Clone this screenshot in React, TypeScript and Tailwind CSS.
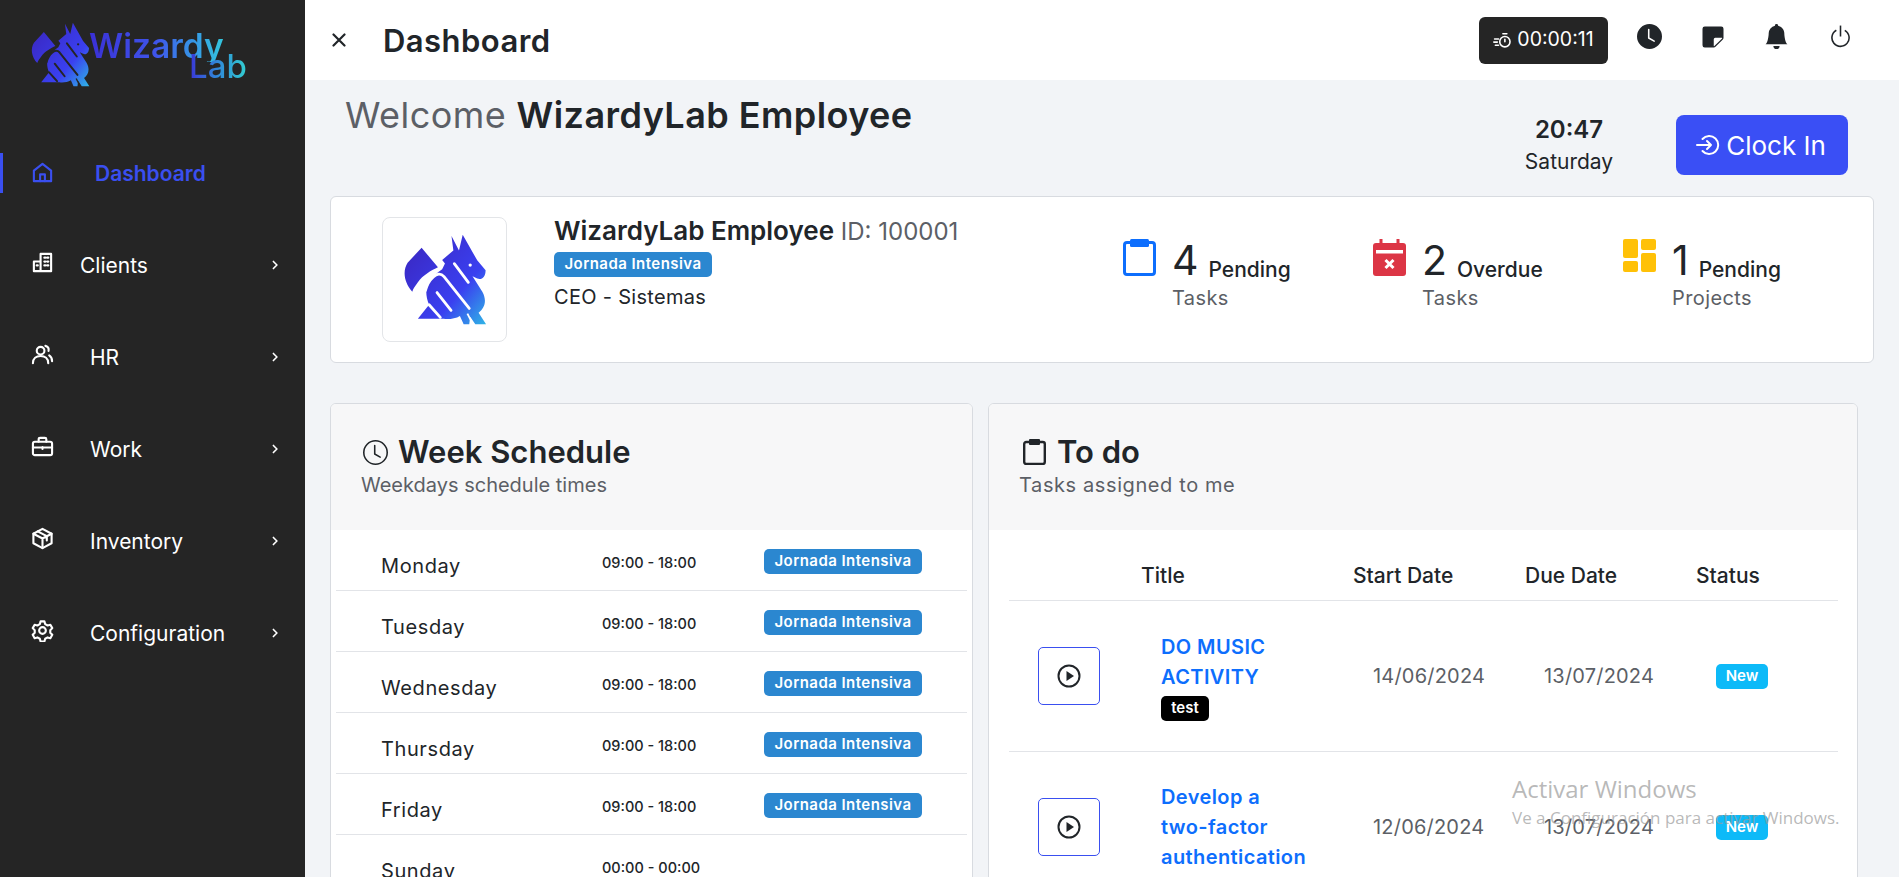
import { ReactNode } from "react";
import { BsBellFill, BsClock, BsClockFill, BsPower, BsStickyFill } from "react-icons/bs";

const FONT = "font-['Inter','Noto_Sans',sans-serif]";

function Dragon({ id, groove, className }: { id: string; groove: string; className: string }) {
  return (
    <svg viewBox="26 36 182 196" className={className}>
      <defs>
        <linearGradient id={id} gradientUnits="userSpaceOnUse" x1="40" y1="90" x2="205" y2="230">
          <stop offset="0" stopColor="#3a2bc9" />
          <stop offset="0.6" stopColor="#3a40f0" />
          <stop offset="1" stopColor="#2fb4e6" />
        </linearGradient>
      </defs>
      <g fill={`url(#${id})`}>
        <path d="M68 66 L103 108 C90 114 70 125 60 140 C55 147 50 153 48 160 C30 140 27 115 38 98 Z" />
        <path d="M132 41 L148 72 L156 38 L187 93 L205 114 C205 128 197 136 187 132 L177 127 L198 160 C208 178 204 195 190 205 L206 230 L183 230 L172 214 L170 230 L158 230 L150 212 C140 218 125 220 115 218 L60 218 L84 188 C76 170 76 150 84 140 C92 128 102 118 112 112 L118 100 L112 92 L136 72 Z" />
      </g>
      <g fill="none" stroke={groove} strokeWidth="6" strokeLinecap="round">
        <path d="M76 158 C82 135 102 112 116 128 L170 196" />
        <path d="M101 162 L131 200" />
        <path d="M138 100 L168 140" />
        <path d="M84 188 L108 215" />
        <path d="M166 207 L178 230" strokeWidth="4" strokeLinecap="butt" />
      </g>
      <circle cx="172" cy="103" r="3.500" fill={groove} />
    </svg>
  );
}

const Outline = ({ children }: { children: ReactNode }) => (
  <svg viewBox="0 0 24 24" fill="none" stroke="currentColor" strokeWidth="2.200" strokeLinecap="round" strokeLinejoin="round" className="h-[23px] w-[23px]">
    {children}
  </svg>
);

const NAV = [
  {
    label: "Clients",
    pad: "pl-[80px]",
    icon: (
      <Outline>
        <path d="M10 21V3h11v18H10Z M3 21V11h7v10H3Z" />
        <path d="M14 7h1M17 7h1M14 11h1M17 11h1M14 15h1M17 15h1M6 15h1" strokeWidth="2.400" />
      </Outline>
    ),
  },
  {
    label: "HR",
    pad: "pl-[90px]",
    icon: (
      <Outline>
        <circle cx="10" cy="8" r="4" />
        <path d="M2 21c0-5 3.500-7.500 8-7.500s8 2.500 8 7.500" />
        <path d="M15 3c2.500.7 3.800 2.800 3.300 5.200M19 13c2 1.200 3 3.500 3 6" />
      </Outline>
    ),
  },
  {
    label: "Work",
    pad: "pl-[90px]",
    icon: (
      <Outline>
        <rect x="2" y="7" width="20" height="14" rx="2" />
        <path d="M8 7V4.500A1.500 1.500 0 0 1 9.500 3h5A1.500 1.500 0 0 1 16 4.500V7M2 13h20M12 12.500v2" />
      </Outline>
    ),
  },
  {
    label: "Inventory",
    pad: "pl-[90px]",
    icon: (
      <Outline>
        <path d="M12 2l9.500 5v10L12 22l-9.500-5V7L12 2Z" />
        <path d="M2.500 7L12 12l9.500-5M12 12v10M7 4.500l9.500 5V14" />
      </Outline>
    ),
  },
  {
    label: "Configuration",
    pad: "pl-[90px]",
    icon: (
      <Outline>
        <circle cx="12" cy="12" r="3.500" />
        <path d="M10 2.500h4l.8 2.900 2.500 1.400 2.900-.8 2 3.500-2.100 2.200v2.600l2.100 2.200-2 3.500-2.900-.8-2.500 1.400-.8 2.900h-4l-.8-2.900-2.500-1.400-2.900.8-2-3.500 2.100-2.200v-2.600L1.800 9.500l2-3.500 2.900.8 2.500-1.400L10 2.500Z" />
      </Outline>
    ),
  },
];

const Chevron = () => (
  <svg viewBox="0 0 10 14" fill="none" stroke="currentColor" strokeWidth="2.400" strokeLinecap="round" strokeLinejoin="round" className="h-[10px] w-[7px]">
    <path d="M2 2l5 5-5 5" />
  </svg>
);

function Sidebar() {
  return (
    <aside className="w-[305px] shrink-0 bg-[#252525] text-white">
      <div className="flex h-[127px] items-start pl-[30px] pt-[22px]">
        <Dragon id="logo-grad" groove="#252525" className="h-[65px] w-[60px]" />
        <div className="relative -ml-[1px] mt-[8px] h-[50px] w-[175px] text-[33.500px] font-semibold leading-[32px]">
          <span className="block w-[136px] bg-linear-to-r from-[#3a2fd6] via-[#3f55ea] to-[#34c8dc] bg-clip-text text-transparent">Wizardy</span>
          <span className="absolute left-[100px] top-[20px] block bg-linear-to-r from-[#3a2fd6] to-[#34cfd0] bg-clip-text text-[33px] font-medium text-transparent">Lab</span>
        </div>
      </div>
      <div className="relative flex h-[92px] items-center text-[#3a4ff0]">
        <span className="absolute left-0 top-[26px] h-[40px] w-[3px] bg-[#3a4ff0]" />
        <span className="mb-[1px] ml-[31px]">
          <Outline>
            <path d="M3 21V10l9-7 9 7v11H3Z" />
            <path d="M9.500 21v-7h5v7" />
          </Outline>
        </span>
        <span className="ml-[41px] pt-[1px] text-[21px] font-semibold">Dashboard</span>
      </div>
      {NAV.map((n) => (
        <div key={n.label} className="relative flex h-[92px] items-center text-[21px]">
          <span className="absolute left-[31px] top-[32px]">{n.icon}</span>
          <span className={`pt-[1px] ${n.pad}`}>{n.label}</span>
          <span className="absolute left-[272px] top-[41px]">
            <Chevron />
          </span>
        </div>
      ))}
    </aside>
  );
}

function Topbar() {
  return (
    <header className="flex h-20 shrink-0 items-center bg-white pl-[27px] text-[#212529]">
      <svg viewBox="0 0 14 14" className="h-[14px] w-[14px]" stroke="currentColor" strokeWidth="2.200" strokeLinecap="round">
        <path d="M1.500 1.500l11 11M12.500 1.500l-11 11" />
      </svg>
      <h1 className="ml-[37px] mt-[3px] text-[31px] font-semibold tracking-[0.015em]">Dashboard</h1>
      <div className="ml-auto flex h-[47px] w-[129px] items-center justify-center gap-[5px] rounded-[6px] bg-[#252525] text-[19.500px] text-white">
        <svg viewBox="0 0 24 24" className="h-[19px] w-[19px]" fill="none" stroke="currentColor" strokeWidth="2" strokeLinecap="round">
          <circle cx="15" cy="13.500" r="6.500" />
          <path d="M12.500 3.500h5M15 13.500v-3M2 10h5M1 14h4.500M3 18h4" />
        </svg>
        00:00:11
      </div>
      <div className="mb-[7px] ml-[31px] mr-[46px] flex items-center gap-[39px] text-[25px]">
        <BsClockFill className="-ml-[2px]" />
        <BsStickyFill className="h-[24px] w-[24px]" />
        <BsBellFill />
        <BsPower />
      </div>
    </header>
  );
}

function Stat({ icon, value, label, sub, gap }: { icon: ReactNode; value: string; label: string; sub: string; gap: string }) {
  return (
    <div className={`flex ${gap}`}>
      <div className="w-[49px] shrink-0 pt-[42px]">{icon}</div>
      <div className="pt-[38px]">
        <div className="flex items-end text-[#212529]">
          <span className="text-[41px] leading-[50px]">{value}</span>
          <span className="ml-[10px] text-[21px] font-medium leading-[30px]">{label}</span>
        </div>
        <div className="text-[20px] leading-[27px] tracking-[0.02em] text-[#5c5f66]">{sub}</div>
      </div>
    </div>
  );
}

function Badge({ className = "" }: { className?: string }) {
  return (
    <span className={`flex h-[25px] w-[158px] items-center justify-center rounded-[5px] bg-[#2b87d0] text-[15px] font-semibold tracking-[0.03em] text-white ${className}`}>
      Jornada Intensiva
    </span>
  );
}

function ProfileCard() {
  return (
    <section className="flex h-[167px] rounded-[6px] border border-[#d8dbe0] bg-white">
      <div className="ml-[51px] mt-[20px] flex h-[125px] w-[125px] items-center justify-center rounded-[8px] border border-[#e3e5e8]">
        <Dragon id="avatar-grad" groove="#ffffff" className="h-[93px] w-[85px]" />
      </div>
      <div className="ml-[47px] w-[569px] pt-[17px]">
        <div className="text-[24px] leading-[34px]">
          <span className="text-[26px] font-semibold text-[#212529]">WizardyLab Employee</span> <span className="text-[#5c5f66]">ID: 100001</span>
        </div>
        <Badge className="mt-[3px]" />
        <div className="mt-[7px] text-[20px] leading-[27px] tracking-[0.015em] text-[#212529]">CEO - Sistemas</div>
      </div>
      <Stat
        gap="w-[250px]"
        value="4"
        label="Pending"
        sub="Tasks"
        icon={
          <svg viewBox="0 0 33 37" className="h-[37px] w-[33px]" fill="none">
            <rect x="1.500" y="3.500" width="30" height="32" rx="2.500" stroke="#0d6efd" strokeWidth="3" />
            <rect x="7" y="0" width="19" height="8" rx="1.500" fill="#0d6efd" />
          </svg>
        }
      />
      <Stat
        gap="w-[250px]"
        value="2"
        label="Overdue"
        sub="Tasks"
        icon={
          <svg viewBox="0 0 33 37" className="h-[37px] w-[33px]">
            <rect x="6.500" y="0" width="3" height="7" fill="#dc3545" />
            <rect x="23.500" y="0" width="3" height="7" fill="#dc3545" />
            <rect x="0" y="4" width="33" height="33" rx="3" fill="#dc3545" />
            <rect x="3" y="11" width="27" height="3.500" fill="#ffffff" />
            <path d="M12.500 21l8 8M20.500 21l-8 8" stroke="#ffffff" strokeWidth="3" />
          </svg>
        }
      />
      <Stat
        gap=""
        value="1"
        label="Pending"
        sub="Projects"
        icon={
          <svg viewBox="0 0 33 33" className="h-[33px] w-[33px]" fill="#ffc107">
            <rect x="0" y="0" width="15" height="19" rx="2" />
            <rect x="0" y="22" width="15" height="11" rx="2" />
            <rect x="18" y="0" width="15" height="11" rx="2" />
            <rect x="18" y="14" width="15" height="19" rx="2" />
          </svg>
        }
      />
    </section>
  );
}

function CardHead({ icon, title, sub, pad, subClass = "" }: { icon: ReactNode; title: string; sub: string; pad: string; subClass?: string }) {
  return (
    <div className={`h-[126px] shrink-0 bg-[#f7f7f8] pt-[29px] ${pad}`}>
      <div className="flex items-center text-[#212529]">
        {icon}
        <span className="text-[31px] font-semibold leading-[38px]">{title}</span>
      </div>
      <div className={`mt-[1px] text-[20px] leading-[27px] text-[#5c5f66] ${subClass}`}>{sub}</div>
    </div>
  );
}

const WEEK = [
  { day: "Monday", time: "09:00 - 18:00", shift: true },
  { day: "Tuesday", time: "09:00 - 18:00", shift: true },
  { day: "Wednesday", time: "09:00 - 18:00", shift: true },
  { day: "Thursday", time: "09:00 - 18:00", shift: true },
  { day: "Friday", time: "09:00 - 18:00", shift: true },
  { day: "Sunday", time: "00:00 - 00:00", shift: false },
];

function WeekSchedule() {
  return (
    <section className="flex h-[520px] w-[643px] shrink-0 flex-col overflow-hidden rounded-t-[6px] border border-[#d8dbe0] bg-white">
      <CardHead
        pad="pl-[30px]"
        title="Week Schedule"
        sub="Weekdays schedule times"
        icon={<BsClock className="ml-[2px] mr-[10px] h-[25px] w-[25px]" />}
      />
      <div className="mx-[5px]">
        {WEEK.map((r) => (
          <div key={r.day} className="grid h-[61px] grid-cols-[266px_162px_1fr] items-center border-b border-[#e2e4e8]">
            <span className="pl-[45px] pt-[11px] text-[20px] tracking-[0.03em] text-[#212529]">{r.day}</span>
            <span className="pt-[5px] text-[14.500px] font-medium text-[#212529]">{r.time}</span>
            {r.shift ? <Badge className="mt-[3px]" /> : <span />}
          </div>
        ))}
      </div>
    </section>
  );
}

const TASKS = [
  { title: ["DO MUSIC", "ACTIVITY"], tag: true, start: "14/06/2024", due: "13/07/2024" },
  { title: ["Develop a", "two-factor", "authentication"], tag: false, start: "12/06/2024", due: "13/07/2024" },
];

const PlayButton = () => (
  <span className="ml-[29px] flex h-[58px] w-[62px] items-center justify-center rounded-[5px] border border-[#3a4ff0]">
    <svg viewBox="0 0 24 24" className="h-[24px] w-[24px]" fill="none">
      <circle cx="12" cy="12" r="10.500" stroke="#212529" strokeWidth="2" />
      <path d="M9.500 7v10l7.500-5-7.500-5Z" fill="#212529" />
    </svg>
  </span>
);

function TodoCard() {
  return (
    <section className="flex h-[520px] w-[870px] shrink-0 flex-col overflow-hidden rounded-t-[6px] border border-[#d8dbe0] bg-white">
      <CardHead
        pad="pl-[30px]"
        subClass="tracking-[0.03em]"
        title="To do"
        sub="Tasks assigned to me"
        icon={
          <svg viewBox="0 0 23 26" className="ml-[4px] mr-[11px] h-[26px] w-[23px]" fill="none">
            <rect x="1.200" y="3" width="20.600" height="22" rx="2" stroke="#212529" strokeWidth="2.400" />
            <rect x="6" y="0" width="11" height="6" rx="1" fill="#212529" />
          </svg>
        }
      />
      <div className="ml-[20px] mr-[19px]">
        <div className="grid h-[71px] grid-cols-[132px_212px_172px_171px_142px] items-end border-b border-[#e2e4e8] pb-[9px] text-[21px] font-medium text-[#212529]">
          <span />
          <span>Title</span>
          <span>Start Date</span>
          <span>Due Date</span>
          <span>Status</span>
        </div>
        {TASKS.map((t) => (
          <div key={t.start} className="grid h-[151px] grid-cols-[132px_212px_172px_171px_142px] items-center border-b border-[#e2e4e8] text-[20px]">
            <PlayButton />
            <div className="pl-[20px] font-semibold leading-[30px] tracking-[0.02em] text-[#0d6efd]">
              {t.title.map((l) => (
                <div key={l}>{l}</div>
              ))}
              {t.tag && (
                <span className="mt-[4px] flex h-[25px] w-[48px] items-center justify-center rounded-[5px] bg-black text-[15px] font-semibold tracking-normal text-white">test</span>
              )}
            </div>
            <span className="pl-[20px] tracking-[0.01em] text-[#5c5f66]">{t.start}</span>
            <span className="pl-[19px] tracking-[0.01em] text-[#5c5f66]">{t.due}</span>
            <span className="ml-[20px] flex h-[25px] w-[52px] items-center justify-center rounded-[5px] bg-[#0dbaf8] text-[15px] font-semibold text-white">New</span>
          </div>
        ))}
      </div>
    </section>
  );
}

export default function App() {
  return (
    <div className={`relative flex h-[877px] w-full overflow-hidden bg-[#f2f4f7] ${FONT}`}>
      <Sidebar />
      <main className="flex min-w-0 flex-1 flex-col">
        <Topbar />
        <div className="px-[25px]">
          <div className="flex h-[116px] items-start">
            <h2 className="ml-[15px] mt-[6px] text-[36px] leading-[58px] tracking-[0.012em] text-[#5c5f66]">
              Welcome <span className="font-semibold text-[#212529]">WizardyLab Employee</span>
            </h2>
            <div className="ml-auto mt-[32px] w-[190px] text-center text-[#212529]">
              <div className="text-[24px] font-semibold leading-[36px]">20:47</div>
              <div className="text-[21px] leading-[28px]">Saturday</div>
            </div>
            <div className="ml-[12px] mr-[26px] mt-[35px] flex h-[60px] w-[172px] items-center justify-center gap-[6px] rounded-[8px] bg-[#3a4ff5] text-[26px] text-white">
              <svg viewBox="0 0 24 24" className="-ml-[2px] h-[24px] w-[24px]" fill="none" stroke="currentColor" strokeWidth="2" strokeLinecap="round" strokeLinejoin="round">
                <path d="M6.500 6a9 9 0 1 1 0 12M1 12h14M11 8l4 4-4 4" />
              </svg>
              Clock In
            </div>
          </div>
          <ProfileCard />
          <div className="mt-[40px] flex gap-[15px]">
            <WeekSchedule />
            <TodoCard />
          </div>
        </div>
      </main>
      <div className="pointer-events-none absolute left-[1512px] top-[773px] font-['Open_Sans',sans-serif] text-[#9a9a9a]/70">
        <div className="text-[24px] leading-[32px]">Activar Windows</div>
        <div className="mt-[2px] text-[17px] leading-[22px]">Ve a Configuración para activar Windows.</div>
      </div>
    </div>
  );
}
